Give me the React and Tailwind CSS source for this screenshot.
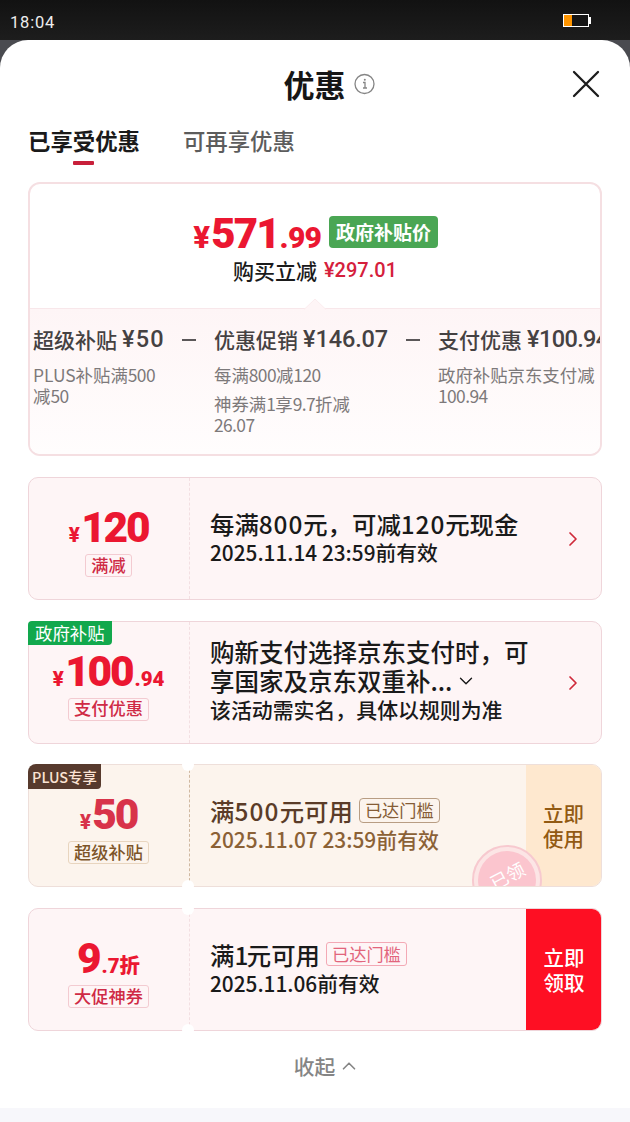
import { ChevronDown, ChevronRight, ChevronUp } from 'lucide-react'

const steps = [
  { label: '超级补贴', value: '¥50', width: 'w-[131px]', valueStyle: 'tracking-[1.2px]', notes: [['PLUS补贴满500', '减50']] },
  { label: '优惠促销', value: '¥146.07', width: 'w-[174px]', valueStyle: '-tracking-[0.1px]', notes: [['每满800减120'], ['神券满1享9.7折减', '26.07']] },
  { label: '支付优惠', value: '¥100.94', width: 'w-[180px]', valueStyle: '-tracking-[0.6px]', notes: [['政府补贴京东支付减', '100.94']] },
]

// digits get their own tracking, the characters around them stay as they are
function Mixed({ text, digits }) {
  return text.split(/(\d[\d.]*)/).filter(Boolean).map((part, i) => (
    /^\d/.test(part) ? <span key={i} className={digits}>{part}</span> : part
  ))
}

function StatusBar() {
  return (
    <header className="flex h-10 items-center justify-between bg-gradient-to-b from-[#121212] to-[#1d1d1d] pr-[39px] pl-[10px]">
      <span className="mt-[6px] font-['Roboto',sans-serif] text-[16.5px] font-normal tracking-[0.8px] text-[#eeeeee]">18:04</span>
      <svg className="h-[13px] w-7" viewBox="0 0 28 13">
        <rect x="0.5" y="0.5" width="25" height="12" fill="#151515" stroke="#fff" />
        <rect x="1" y="1" width="8" height="11" fill="#ff9500" />
        <rect x="26" y="3" width="2" height="7" fill="#fff" />
      </svg>
    </header>
  )
}

function Minus() {
  return (
    <div className="flex h-7 w-[50px] shrink-0 items-center justify-center">
      <div className="h-[2px] w-[14px] bg-[#5b5758]" />
    </div>
  )
}

function Step({ label, value, width, valueStyle, notes }) {
  return (
    <div className={`shrink-0 ${width}`}>
      <div className="-mt-px flex h-7 items-center gap-[5px] text-[21px] leading-7 whitespace-nowrap text-[#454142]">
        <span>{label}</span>
        <span className={`font-['Roboto',sans-serif] text-[23.5px] ${valueStyle}`}>{value}</span>
      </div>
      <div className="mt-[11px] flex flex-col gap-[8px] text-[17.4px] leading-[21px] font-normal whitespace-nowrap text-[#7d797a]">
        {notes.map((lines) => (
          <div key={lines[0]}>
            {lines.map((l) => <p key={l}><Mixed text={l} digits="-tracking-[0.6px]" /></p>)}
          </div>
        ))}
      </div>
    </div>
  )
}

function Summary() {
  return (
    <section className="flex h-[274px] flex-col overflow-hidden rounded-xl border-2 border-[#f5dfe2] bg-white">
      <div className="h-[124px] shrink-0 pt-[32px]">
        <div className="flex h-8 items-center justify-center gap-[8px] pl-px">
          <div className="flex items-baseline pt-[7px] font-['Roboto',sans-serif] font-black text-[#eb1731]">
            <span className="mr-px font-['Inter',sans-serif] text-[30px] leading-8 font-extrabold">¥</span>
            <span className="text-[42px] leading-8 tracking-[-1.9px]">571</span>
            <span className="ml-px text-[30px] leading-8 tracking-[-0.8px]">.99</span>
          </div>
          <span className="flex h-8 items-center rounded-[4px] bg-[#4aa654] px-[7px] pb-px text-[19px] leading-6 font-bold text-white">政府补贴价</span>
        </div>
        <div className="mt-[8px] flex h-7 items-center justify-center gap-[7px] text-[21px] leading-7 text-[#1a1a1a]">
          <span>购买立减</span>
          <span className="font-['Roboto',sans-serif] text-[20px] text-[#d5203c]">¥297.01</span>
        </div>
      </div>
      <div className="relative flex-1 border-t border-[#f8e7ea] bg-gradient-to-b from-[#fef5f6] to-[#fffdfd] pt-[17px] pl-[3px]">
        <svg className="absolute -top-[11px] left-[274px] h-3 w-[22px]" viewBox="0 0 22 12">
          <path d="M0 11.5 11 1l11 10.5" fill="#fef5f6" stroke="#fbecee" />
        </svg>
        <div className="flex w-[567px] overflow-hidden">
          <Step {...steps[0]} />
          <Minus />
          <Step {...steps[1]} />
          <Minus />
          <Step {...steps[2]} />
        </div>
      </div>
    </section>
  )
}

function Price({ symbol, main, rest, color = 'text-[#eb1731]' }) {
  return (
    <div className={`flex h-9 items-baseline justify-center font-['Roboto','Noto_Sans_CJK_SC',sans-serif] font-black ${color}`}>
      {symbol && <span className="mr-px font-['Inter',sans-serif] text-[20px] leading-9 font-extrabold">¥</span>}
      <span className="text-[42.5px] leading-9 tracking-[-2.2px]">{main}</span>
      {rest && <span className="ml-[2px] text-[20.5px] leading-9">{rest}</span>}
    </div>
  )
}

function Coupon({ price, tag, tagStyle = 'border-[#f3cbd1] text-[#cf2a45]', badge, action, seal, notched, theme = 'border-[#efd5da] bg-[#fef5f6]', dash = 'border-[#f3dfe2]', children }) {
  return (
    <article className="relative h-[123px]">
      <div className={`relative flex h-full overflow-hidden rounded-[10px] border ${theme}`}>
        <div className="flex w-[160px] shrink-0 flex-col items-center pt-[32px] pr-px">
          {price}
          <span className={`mt-[8px] flex h-[23px] items-center rounded-[3px] border px-[5px] pb-[2px] text-[17.2px] leading-5 ${tagStyle}`}>{tag}</span>
        </div>
        <div className={`border-l border-dashed ${dash}`} />
        <div className="flex flex-1 flex-col justify-center pb-[3px] pl-5">{children}</div>
        {action}
        {seal}
      </div>
      {badge}
      {notched && (
        <>
          <div className="absolute -top-[5px] left-[154px] size-3 rounded-full bg-white" />
          <div className="absolute -bottom-[5px] left-[154px] size-3 rounded-full bg-white" />
        </>
      )}
    </article>
  )
}

function Arrow() {
  return <ChevronRight className="absolute top-[49px] right-[16px] size-6 text-[#cf2a3a]" strokeWidth={1.7} />
}

function Seal() {
  return (
    <div className="absolute top-[80px] left-[443px] flex size-[70px] items-center justify-center rounded-full border-2 border-[#f7c9cf] bg-[#fce5e5]">
      <div className="flex size-[58px] items-center justify-center rounded-full bg-[#fbc5ce] pb-[10px]">
        <span className="-rotate-[28deg] text-[18px] leading-5 font-normal text-white">已领</span>
      </div>
    </div>
  )
}

export default function App() {
  return (
    <div className="h-[1122px] w-[630px] overflow-hidden bg-[#4a4b50] font-['Noto_Sans_CJK_SC',sans-serif] font-medium">
      <StatusBar />
      <main className="flex h-[1082px] flex-col rounded-t-[28px] bg-white">
        <div className="relative flex h-[88px] items-center justify-center gap-2 pl-[29px]">
          <h1 className="text-[31px] leading-10 font-bold text-[#161616]">优惠</h1>
          <svg className="size-[22px]" viewBox="0 0 22 22" fill="none" stroke="#858585">
            <circle cx="10.5" cy="11" r="9.5" strokeWidth="1.3" />
            <path d="M9 9.5h2V15M9 15h4" strokeWidth="1.3" />
            <circle cx="10.8" cy="6.7" r="1" fill="#858585" stroke="none" />
          </svg>
          <svg className="absolute top-[30px] right-[30px] size-7" viewBox="0 0 28 28" stroke="#1c1c1c" strokeWidth="2.3" strokeLinecap="round">
            <path d="M2 2l24 24M26 2 2 26" />
          </svg>
        </div>

        <nav className="flex h-[54px] gap-[43px] px-7 text-[22.4px] leading-6">
          <div className="flex flex-col items-center font-bold text-[#1a1a1a]">
            <span>已享受优惠</span>
            <div className="mt-[9px] h-1 w-[21px] rounded-[1px] bg-[#c8203a]" />
          </div>
          <span className="text-[#5c5c5c]">可再享优惠</span>
        </nav>

        <div className="flex flex-col px-7">
          <Summary />
          <div className="mt-[21px] flex flex-col gap-[20.7px]">
            <Coupon price={<Price symbol main="120" />} tag="满减">
              <p className="text-[24.4px] leading-[29px] text-[#1a1a1a]"><Mixed text="每满800元，可减120元现金" digits="tracking-[0.9px]" /></p>
              <p className="text-[20.8px] leading-[28px] text-[#1a1a1a]">2025.11.14 23:59前有效</p>
              <Arrow />
            </Coupon>

            <Coupon
              price={<Price symbol main="100" rest=".94" />}
              tag="支付优惠"
              badge={<span className="absolute top-0 left-0 flex h-6 items-center rounded-tl-[4px] rounded-br-[4px] bg-[#12a84d] px-[7px] text-[17.4px] leading-5 font-normal text-white">政府补贴</span>}
            >
              <p className="text-[24.5px] leading-[29px] text-[#1a1a1a]">购新支付选择京东支付时，可</p>
              <div className="flex items-center gap-[3px] text-[24.5px] leading-[29px] text-[#1a1a1a]">
                享国家及京东双重补...
                <ChevronDown className="size-[22px]" strokeWidth={1.5} />
              </div>
              <p className="text-[20.9px] leading-[29px] text-[#1a1a1a]">该活动需实名，具体以规则为准</p>
              <Arrow />
            </Coupon>

            <Coupon
              notched
              price={<Price symbol main="50" color="text-[#d8334a]" />}
              tag="超级补贴"
              tagStyle="border-[#e8d5bf] text-[#7d5428]"
              theme="border-[#eedfda] bg-[#fcf4ed]"
              dash="border-[#d0b8a0]"
              badge={<span className="absolute top-0 left-0 flex h-[25px] w-[73px] items-center justify-center rounded-tl-[8px] rounded-br-[4px] bg-[#573a2d] text-[14.4px] leading-5 text-[#fbe3d3]">PLUS专享</span>}
              action={<div className="flex w-[75px] items-center justify-center bg-[#fee8cf] text-center text-[20.5px] leading-[25px] text-[#925a13]">立即<br />使用</div>}
              seal={<Seal />}
            >
              <div className="flex items-center text-[24.4px] leading-[29px] text-[#5b3c28]">
                <span><Mixed text="满500元可用" digits="tracking-[1.2px]" /></span>
                <span className="ml-[6px] flex h-[25px] items-center rounded-[4px] border border-[#b89d83] px-[5px] pb-px text-[17.2px] leading-5 font-normal text-[#855c36]">已达门槛</span>
              </div>
              <p className="text-[20.9px] leading-[28px] text-[#8b6136]">2025.11.07 23:59前有效</p>
            </Coupon>

            <Coupon
              notched
              price={<Price main="9" rest=".7折" />}
              tag="大促神券"
              action={<div className="-my-px -mr-px flex w-[76px] items-center justify-center bg-[#fe0f23] text-center text-[20.5px] leading-[25px] text-white">立即<br />领取</div>}
            >
              <div className="flex items-center text-[24.4px] leading-[29px] text-[#1a1a1a]">
                <span><Mixed text="满1元可用" digits="-tracking-[1.5px]" /></span>
                <span className="ml-[6px] flex h-6 items-center rounded-[3px] border border-[#f3a9b5] px-[5px] pb-px text-[17.2px] leading-5 font-normal text-[#e2657c]">已达门槛</span>
              </div>
              <p className="text-[20.8px] leading-[28px] text-[#1a1a1a]">2025.11.06前有效</p>
            </Coupon>
          </div>
        </div>

        <div className="flex flex-1 items-center justify-center gap-[3px] pb-[7px] pl-6 text-[20.8px] leading-7 text-[#858585]">
          收起
          <ChevronUp className="size-[22px]" strokeWidth={1.8} />
        </div>
        <div className="h-[14px] bg-[#f7f7fb]" />
      </main>
    </div>
  )
}
